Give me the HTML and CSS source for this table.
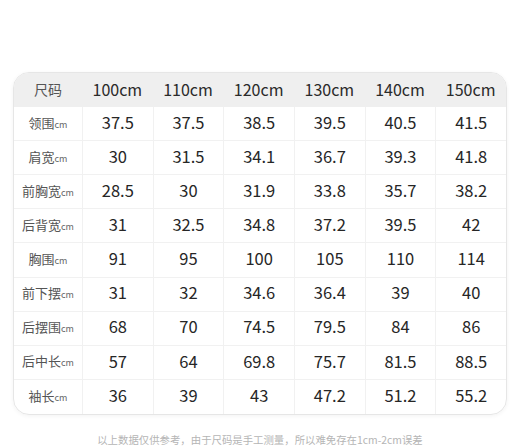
FILE: index.html
```html
<!DOCTYPE html>
<html lang="zh">
<head>
<meta charset="utf-8">
<link rel="stylesheet" href="styles.css">
</head>
<body>
<div class="page">
  <div class="table">
    <div class="row head">
      <div class="cell label">尺码</div>
      <div class="cell">100cm</div><div class="cell">110cm</div><div class="cell">120cm</div><div class="cell">130cm</div><div class="cell">140cm</div><div class="cell">150cm</div>
    </div>
    <div class="row"><div class="cell label">领围<small>cm</small></div><div class="cell">37.5</div><div class="cell">37.5</div><div class="cell">38.5</div><div class="cell">39.5</div><div class="cell">40.5</div><div class="cell">41.5</div></div>
    <div class="row"><div class="cell label">肩宽<small>cm</small></div><div class="cell">30</div><div class="cell">31.5</div><div class="cell">34.1</div><div class="cell">36.7</div><div class="cell">39.3</div><div class="cell">41.8</div></div>
    <div class="row"><div class="cell label">前胸宽<small>cm</small></div><div class="cell">28.5</div><div class="cell">30</div><div class="cell">31.9</div><div class="cell">33.8</div><div class="cell">35.7</div><div class="cell">38.2</div></div>
    <div class="row"><div class="cell label">后背宽<small>cm</small></div><div class="cell">31</div><div class="cell">32.5</div><div class="cell">34.8</div><div class="cell">37.2</div><div class="cell">39.5</div><div class="cell">42</div></div>
    <div class="row"><div class="cell label">胸围<small>cm</small></div><div class="cell">91</div><div class="cell">95</div><div class="cell">100</div><div class="cell">105</div><div class="cell">110</div><div class="cell">114</div></div>
    <div class="row"><div class="cell label">前下摆<small>cm</small></div><div class="cell">31</div><div class="cell">32</div><div class="cell">34.6</div><div class="cell">36.4</div><div class="cell">39</div><div class="cell">40</div></div>
    <div class="row"><div class="cell label">后摆围<small>cm</small></div><div class="cell">68</div><div class="cell">70</div><div class="cell">74.5</div><div class="cell">79.5</div><div class="cell">84</div><div class="cell">86</div></div>
    <div class="row"><div class="cell label">后中长<small>cm</small></div><div class="cell">57</div><div class="cell">64</div><div class="cell">69.8</div><div class="cell">75.7</div><div class="cell">81.5</div><div class="cell">88.5</div></div>
    <div class="row last"><div class="cell label">袖长<small>cm</small></div><div class="cell">36</div><div class="cell">39</div><div class="cell">43</div><div class="cell">47.2</div><div class="cell">51.2</div><div class="cell">55.2</div></div>
  </div>
  <p class="note">以上数据仅供参考，由于尺码是手工测量，所以难免存在1cm-2cm误差</p>
</div>
</body>
</html>
```
FILE: styles.css
```css
html, body {
  margin: 0;
  padding: 0;
  background: #ffffff;
}
.page {
  width: 520px;
  height: 446px;
  padding: 72px 13px 0 13px;
  box-sizing: border-box;
  font-family: "Noto Sans CJK SC", "Noto Sans", sans-serif;
}
.table {
  width: 494px;
  border: 1px solid #e6e6e6;
  border-radius: 16px;
  overflow: hidden;
  box-sizing: border-box;
  box-shadow: 0 1px 4px rgba(0, 0, 0, 0.05);
}
.row {
  display: grid;
  grid-template-columns: 68px repeat(6, 1fr);
  height: 34.1px;
  border-bottom: 1px solid #f1f1f1;
  box-sizing: border-box;
}
.row.last {
  border-bottom: none;
}
.row.head {
  background: #efefef;
  border-bottom: none;
}
.cell {
  display: flex;
  align-items: center;
  justify-content: center;
  padding-bottom: 3px;
  box-sizing: border-box;
  font-size: 16.5px;
  font-weight: 400;
  color: #262626;
  border-left: 1px solid #f1f1f1;
  line-height: 1;
}
.cell.label {
  border-left: none;
  font-size: 13px;
  color: #555555;
}
.head .cell {
  border-left: none;
  font-size: 16px;
  color: #2a2a2a;
}
.head .cell.label {
  font-size: 14px;
  color: #555555;
}
.cell small {
  font-size: 9px;
  color: #666666;
  margin-top: 4px;
}
.note {
  margin: 18px 0 0 0;
  text-align: center;
  font-size: 10.4px;
  color: #b5b5b5;
  line-height: 13px;
}
```
